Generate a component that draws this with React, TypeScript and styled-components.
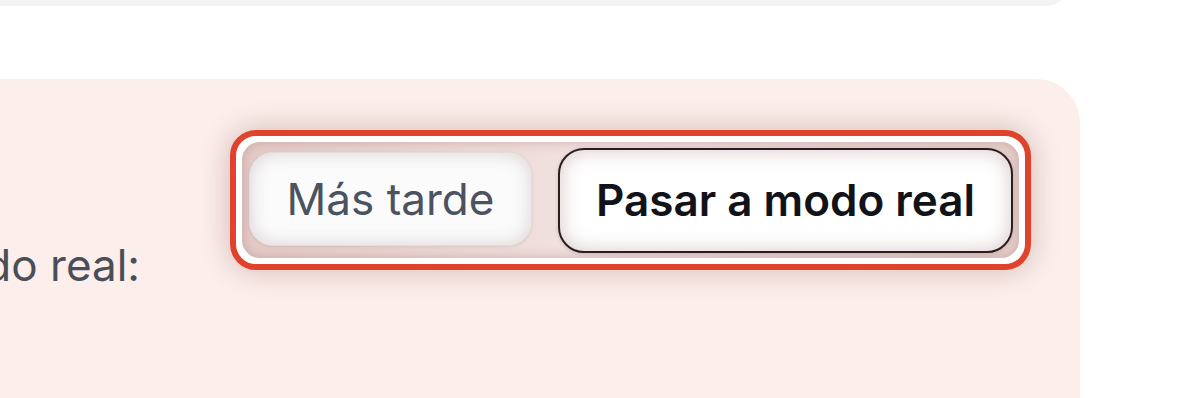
import styled, { createGlobalStyle } from 'styled-components';

const GlobalStyle = createGlobalStyle`
  html, body {
    margin: 0;
    padding: 0;
    background: #ffffff;
    font-family: Inter, "Noto Sans", sans-serif;
  }
`;

function App() {
  return (
    <>
      <GlobalStyle />
      <Page>
        <TopCard />
        <Banner>
          <Message>Cambia a modo real:</Message>
          <Highlight>
            <Segmented>
              <LaterButton>Más tarde</LaterButton>
              <RealButton>Pasar a modo real</RealButton>
            </Segmented>
          </Highlight>
        </Banner>
      </Page>
    </>
  );
}

export default App;

const Page = styled.div`
  width: 1200px;
  height: 398px;
  overflow: hidden;
  display: flex;
  flex-direction: column;
`;

const TopCard = styled.div`
  flex: 0 0 auto;
  width: 1170px;
  height: 206px;
  margin-top: -200px;
  margin-left: -100px;
  background: #f3f3f2;
  border-radius: 24px;
`;

const Banner = styled.section`
  flex: 0 0 auto;
  display: flex;
  align-items: flex-start;
  gap: 90px;
  width: 1480px;
  height: 420px;
  box-sizing: border-box;
  margin-top: 73px;
  margin-left: -400px;
  padding: 51px 49px 0 40px;
  background: #fbeeeb;
  border-radius: 44px;
`;

const Message = styled.p`
  flex: 0 0 500px;
  margin: 109px 0 0;
  text-align: right;
  white-space: nowrap;
  font-size: 44px;
  line-height: 53px;
  color: #4a4f57;
`;

const Highlight = styled.div`
  flex: 0 0 auto;
  display: flex;
  padding: 6px;
  background: #ffffff;
  border: 6px solid #e0432b;
  border-radius: 26px;
  box-shadow: 0 0 28px rgba(120, 60, 50, 0.3);
`;

const Segmented = styled.div`
  display: flex;
  align-items: center;
  gap: 26px;
  width: 777px;
  height: 116px;
  box-sizing: border-box;
  padding: 0 6px 0 7px;
  background: linear-gradient(90deg, #e4cbc8 0%, #f1e2e0 45%, #e6d0cd 100%);
  border-radius: 18px;
  box-shadow: inset 0 0 12px rgba(150, 90, 85, 0.35);
`;

const LaterButton = styled.button`
  flex: 0 0 283px;
  height: 94px;
  margin-top: -2px;
  box-sizing: border-box;
  border: 1px solid #e4dcdb;
  border-radius: 24px;
  background: #fbfbfb;
  box-shadow: inset 0 0 18px rgba(170, 150, 150, 0.4), 0 1px 3px rgba(120, 80, 80, 0.15);
  font-family: Inter, "Noto Sans", sans-serif;
  font-size: 44px;
  font-weight: 400;
  color: #4b5260;
  cursor: pointer;
`;

const RealButton = styled.button`
  flex: 0 0 455px;
  height: 105px;
  box-sizing: border-box;
  border: 2px solid #2b1d1d;
  border-radius: 26px;
  background: #ffffff;
  box-shadow: inset 0 0 20px rgba(170, 130, 130, 0.45), 0 1px 4px rgba(90, 50, 50, 0.2);
  font-family: Inter, "Noto Sans", sans-serif;
  font-size: 44px;
  font-weight: 600;
  color: #111318;
  cursor: pointer;
`;
